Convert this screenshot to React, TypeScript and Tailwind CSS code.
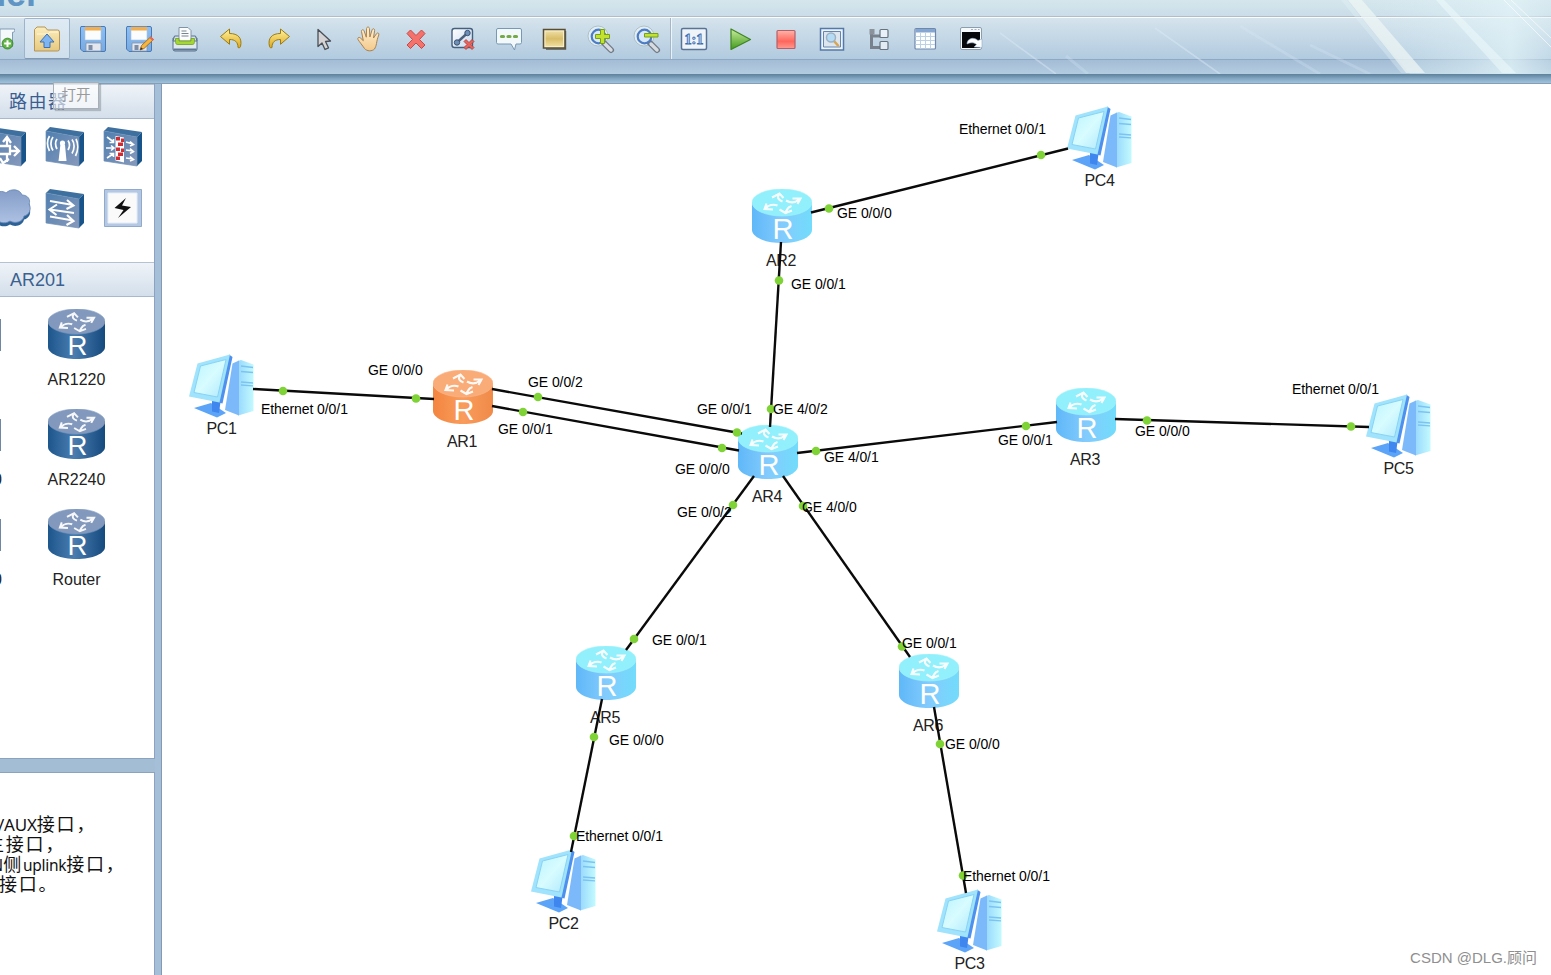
import type { ReactNode } from "react";

const INK = "#44607f";

function Icon({ children, s = 32 }: { children: ReactNode; s?: number }) {
  return (
    <svg width={s} height={s} viewBox="0 0 32 32" fill="none" className="shrink-0">
      {children}
    </svg>
  );
}

function Defs() {
  return (
    <svg width="0" height="0" className="absolute">
      <defs>
        <linearGradient id="gold" x1="0" y1="0" x2="0" y2="1"><stop offset="0" stopColor="#fff3a0" /><stop offset="1" stopColor="#dfa81d" /></linearGradient>
        <linearGradient id="folder" x1="0" y1="0" x2="0" y2="1"><stop offset="0" stopColor="#fbedbb" /><stop offset="1" stopColor="#e6c97f" /></linearGradient>
        <linearGradient id="green" x1="0" y1="0" x2="0" y2="1"><stop offset="0" stopColor="#c9ec9c" /><stop offset="1" stopColor="#3f9a1c" /></linearGradient>
        <linearGradient id="red" x1="0" y1="0" x2="0" y2="1"><stop offset="0" stopColor="#ffb3a8" /><stop offset=".6" stopColor="#ff665c" /><stop offset="1" stopColor="#ff9a90" /></linearGradient>
        <linearGradient id="note" x1="0" y1="0" x2="0" y2="1"><stop offset="0" stopColor="#ecdc9f" /><stop offset=".5" stopColor="#d9bd69" /><stop offset="1" stopColor="#eddd9d" /></linearGradient>
        <linearGradient id="disk" x1="0" y1="0" x2="0" y2="1"><stop offset="0" stopColor="#8fc0f4" /><stop offset="1" stopColor="#77a8e0" /></linearGradient>
        <linearGradient id="pale" x1="0" y1="0" x2="1" y2="1"><stop offset="0" stopColor="#ffffff" /><stop offset="1" stopColor="#c4d8ee" /></linearGradient>
        <linearGradient id="hand" x1="0" y1="0" x2="0" y2="1"><stop offset="0" stopColor="#fff0d2" /><stop offset="1" stopColor="#f3c98b" /></linearGradient>
        <linearGradient id="tile" x1="0" y1="0" x2="1" y2="1"><stop offset="0" stopColor="#4f7fb0" /><stop offset="1" stopColor="#8799bb" /></linearGradient>
        <linearGradient id="cloud" x1="0" y1="0" x2="0" y2="1"><stop offset="0" stopColor="#849dc7" /><stop offset="1" stopColor="#adc1e3" /></linearGradient>
        <linearGradient id="navyBody" x1="0" y1="0" x2="1" y2="0"><stop offset="0" stopColor="#1d568c" /><stop offset=".45" stopColor="#4a7db0" /><stop offset="1" stopColor="#154a7e" /></linearGradient>
        <linearGradient id="orangeBody" x1="0" y1="0" x2="1" y2="0"><stop offset="0" stopColor="#f3853f" /><stop offset=".5" stopColor="#f99c5c" /><stop offset="1" stopColor="#f08a49" /></linearGradient>
        <linearGradient id="cyanBody" x1="0" y1="0" x2="1" y2="0"><stop offset="0" stopColor="#5fb8f8" /><stop offset=".5" stopColor="#83cbfd" /><stop offset="1" stopColor="#72dcfb" /></linearGradient>
        <linearGradient id="screen" x1="0" y1="0" x2="1" y2="1"><stop offset="0" stopColor="#b9f3fd" /><stop offset=".5" stopColor="#d8fcff" /><stop offset="1" stopColor="#aee8fd" /></linearGradient>
        <linearGradient id="tower" x1="0" y1="0" x2="1" y2="0"><stop offset="0" stopColor="#98d8fd" /><stop offset="1" stopColor="#c3fafe" /></linearGradient>
      </defs>
    </svg>
  );
}

const FloppyBody = () => (
  <>
    <path d="M4 3.500h23a1.500 1.500 0 0 1 1.500 1.500v22a1.500 1.500 0 0 1-1.500 1.500H6L3.500 26V5z" fill="url(#disk)" stroke="#4a7ab5" />
    <path d="M8 4h16v13H8z" fill="#fafcfd" stroke="#a9c4e4" strokeWidth=".6" />
    <path d="M8 4h16v3.500H8z" fill="#f3ae4d" />
    <path d="M9 20h15v8H9z" fill="#e4e8ee" stroke="#8295b0" strokeWidth=".8" />
    <path d="M11.500 22h4v5h-4z" fill="#7c8da5" />
  </>
);

const UndoShape = () => (
  <path d="M4.500 13.500 13.500 6v4.500c8.500 0 13 4.500 11 13-.2 1.200-1.500 1.500-2.500 1 0-5.500-3-8-8.500-8v4.800z" fill="url(#gold)" stroke="#9a7c12" strokeLinejoin="round" />
);

const Lens = () => (
  <>
    <circle cx="13" cy="13" r="10" fill="#e3eef0" stroke="#a2b8c2" strokeWidth=".8" />
    <path d="m19 20 7 7" stroke="#707984" strokeWidth="6" strokeLinecap="round" />
    <path d="m20 21 6 6" stroke="#d6dce1" strokeWidth="3.400" strokeLinecap="round" />
    <circle cx="13.500" cy="13.500" r="6.800" fill="#d9e9fb" stroke="#4c7cc4" strokeWidth="2.200" />
  </>
);

const editIcons: ReactNode[] = [
  <>
    <path d="M3.500 28V6.500L6 4h8l2.500 3H26.500a2 2 0 0 1 2 2v17a2 2 0 0 1-2 2z" fill="url(#folder)" stroke="#b3955a" />
    <path d="M6 11h11l2-2h8" stroke="#fff7d9" />
    <path d="m16 11 7 8h-4v5.500h-6V19H9z" fill="#7fb5f0" stroke="#3e70b4" strokeLinejoin="round" />
  </>,
  <FloppyBody />,
  <>
    <FloppyBody />
    <path d="m17 27 1.500-4.500L27.500 14l3 2.500L21 25.500z" fill="#f6b53f" stroke="#a56a1e" strokeWidth=".9" />
    <path d="m26.500 15 1.500-1.500 3 3-1.500 1.500z" fill="#e4685b" />
    <path d="m17 27 1-2.800 2 1.800z" fill="#333" />
  </>,
  <>
    <path d="M4 15h24v11a2 2 0 0 1-2 2H6a2 2 0 0 1-2-2z" fill="#e0e9f1" stroke="#56718f" />
    <path d="M5.500 13h21l1.500 5H4z" fill="#d6e1ea" stroke="#56718f" />
    <path d="M10 4.500h9l3 3V18H10z" fill="#fbfcfd" stroke="#8293a5" />
    <path d="M12.500 8h5M12.500 10.500h7M12.500 13h7" stroke="#77848f" />
    <path d="M6.500 15.500c0 5 0 6 2.500 6h14c2.500 0 2.500-1 2.500-6h-3.500V18H10v-2.500z" fill="#a4d634" stroke="#6fa01d" strokeWidth=".8" />
    <path d="M4.500 26.500h23" stroke="#5e7793" strokeWidth="2" />
  </>,
  <UndoShape />,
  <g transform="translate(32 0) scale(-1 1)"><UndoShape /></g>,
  <path d="M10 6.500v17l4-3.500 3 6.500 3.500-1.700-3-6.300 5-.5z" fill="#d5d3d3" stroke="#4a4f57" strokeWidth="1.300" strokeLinejoin="round" />,
  <path d="M10.500 25.500c-2-3-5-6.500-6.500-9-.8-1.800 1-2.800 2.300-1.600l3 2.800L7.500 8.500c-.2-2 2-2.400 2.600-.6l2.200 6.300.3-8.700c.2-2 2.600-2 2.800 0l.5 8.500 2.200-7.200c.6-1.700 2.800-1.200 2.500.7L19.500 15l3-4.300c1.100-1.500 3-.4 2.300 1.300-1.300 3.300-1.800 5.500-2.300 8.500-.4 2.500-1.200 4-2 5.500-2.500 2.500-7.500 2.500-10-.5z" fill="url(#hand)" stroke="#a9814d" />,
  <path d="M7 10.500 10.500 7l5.500 5.500L21.500 7l3.500 3.500-5.500 6L25 22l-3.500 3.500-5.500-5.500-5.500 5.500L7 22l5.500-5.500z" fill="#f3736c" stroke="#c94744" strokeLinejoin="round" />,
  <>
    <rect x="5" y="5.500" width="20.500" height="19" rx="2.500" fill="url(#pale)" stroke={INK} strokeWidth="1.400" />
    <path d="m9.500 20 11-10" stroke="#4c617d" strokeWidth="2.400" />
    <circle cx="10" cy="19.500" r="2.700" fill="#6d8fb8" stroke="#3c5272" />
    <circle cx="20.500" cy="10" r="2.700" fill="#6d8fb8" stroke="#3c5272" />
    <path d="m17 18.500 2-2 3 3 3-3 2 2-3 3 3 3-2 2-3-3-3 3-2-2 3-3z" fill="#e8615a" stroke="#a63b3a" strokeWidth=".8" />
  </>,
  <>
    <path d="M5 5.500h22a1.500 1.500 0 0 1 1.500 1.500v12.500A1.500 1.500 0 0 1 27 21h-4l-1.500 6-3.500-6H5a1.500 1.500 0 0 1-1.500-1.500V7A1.500 1.500 0 0 1 5 5.500z" fill="#f3f8fb" stroke="#7799b6" />
    <path d="M8.500 13.500h2M15 13.500h2M21.500 13.500h2" stroke="#74a848" strokeWidth="3.200" strokeLinecap="round" />
  </>,
  <>
    <path d="M4.500 6.500h21.500v18.500H4.500z" fill="#f8eec5" stroke="#574e34" strokeWidth="1.500" />
    <path d="M6.500 8.500h17.500v14.500H6.500z" fill="url(#note)" />
    <path d="M26.500 8v18H7" stroke="#575548" strokeWidth="1.400" />
  </>,
  <>
    <Lens />
    <path d="M15.500 6.500h4v5h5v4h-5v5h-4v-5h-5v-4h5z" fill="#c2e22e" stroke="#77a018" />
  </>,
  <>
    <Lens />
    <path d="M13.500 10.500h13.500v3.500h-13.500z" fill="#c2e22e" stroke="#77a018" />
  </>,
];

const viewIcons: ReactNode[] = [
  <>
    <rect x="3.500" y="5.500" width="25" height="21" rx="1.500" fill="#eff4f9" stroke="#587396" strokeWidth="1.500" />
    <text x="16" y="21" textAnchor="middle" fontFamily="Liberation Serif, serif" fontWeight="700" fontSize="14.500" textLength="19" lengthAdjust="spacingAndGlyphs" fill="#cfe2fa" stroke="#3d6cae" strokeWidth=".9">1:1</text>
  </>,
  <path d="M7 6v20.500L26.500 16.500z" fill="url(#green)" stroke="#3f8423" strokeWidth="1.200" strokeLinejoin="round" />,
  <rect x="7" y="7.500" width="18" height="18" rx="1" fill="url(#red)" stroke="#b3606a" strokeWidth="1.200" />,
  <>
    <path d="M4.500 5.500h23v21.500H4.500z" fill="#eef4fb" stroke="#5479a8" strokeWidth="1.500" />
    <path d="M7.500 8.500h17v15.500H7.500z" fill="#dde6ee" stroke="#6485ae" />
    <path d="m17.500 17.500 4.500 5" stroke="#d6a655" strokeWidth="2.600" strokeLinecap="round" />
    <circle cx="15" cy="14.500" r="4.500" fill="#b4dcf4" stroke="#9bb2c6" strokeWidth="1.500" />
  </>,
  <>
    <path d="M8.500 7v17.500H18M8.500 13H17" stroke="#79818c" strokeWidth="3" />
    <rect x="6.500" y="6" width="5" height="5.500" fill="#8b929c" />
    <rect x="17" y="6.500" width="8" height="8" rx="1" fill="#eaf0f7" stroke="#67727f" strokeWidth="1.200" />
    <rect x="17" y="18.500" width="8" height="8" rx="1" fill="#e2ebf4" stroke="#67727f" strokeWidth="1.200" />
  </>,
  <>
    <rect x="6" y="5.500" width="20.500" height="20.500" rx="1" fill="#fdfefe" stroke="#6d88ab" strokeWidth="1.200" />
    <path d="M6.500 6h19.500v3.500H6.500z" fill="#86a6d2" />
    <path d="M6.500 13.500h19.500M6.500 17.500h19.500M6.500 21.500h19.500M11.500 10v15.500M16.500 10v15.500M21.500 10v15.500" stroke="#bcd0e6" />
  </>,
  <>
    <rect x="5.500" y="4.500" width="21" height="22" rx="1.500" fill="#f7fafc" stroke="#8c9dae" />
    <path d="M16 6.500h2M19.500 6.500h2M23 6.500h1.500" stroke="#9fb1c4" />
    <path d="M7 9h18v16H7z" fill="#05070a" />
    <path d="M12 21c0-5 6-8 11-3.500l4-1.500v8.500l-8-.5 2.500-2.500c-3-2.500-6-2-9.500-.5z" fill="#fbfdfe" stroke="#93abc6" strokeWidth=".6" />
  </>,
];

type Tone = "cyan" | "orange" | "navy";
const tones: Record<Tone, { top: string; body: string; rim: string }> = {
  cyan: { top: "#91f0fb", body: "url(#cyanBody)", rim: "#a3f3fb" },
  orange: { top: "#f9ab78", body: "url(#orangeBody)", rim: "#fbb98d" },
  navy: { top: "#8398bd", body: "url(#navyBody)", rim: "#7d9cc0" },
};

function RouterIcon({ tone, w, h }: { tone: Tone; w: number; h: number }) {
  const t = tones[tone];
  return (
    <svg width={w} height={h} viewBox="0 0 60 54" preserveAspectRatio="none" className="shrink-0">
      <path d="M0 13v28c0 7 13 13 30 13s30-6 30-13V13z" fill={t.body} />
      <ellipse cx="30" cy="13.500" rx="30" ry="13.500" fill={t.top} stroke={t.rim} strokeWidth=".6" />
      <g stroke="#fff" strokeWidth="2.100" fill="none" opacity=".93">
        <path d="M20 8.500 27.500 4.500 31.500 9M27 5.500c-2 3-1 5.500 3.500 7" />
        <path d="M40.500 9.500h8l-3 5.500M47 10.500c-4 3.500-9 3.500-13 1" />
        <path d="M14.500 14.500 12.500 20l8.500.5M13.500 19.500c3-3.500 8-4.500 12-3" />
        <path d="M27.500 20.500 33.500 24l6.500-2.500M33.500 23c2.500-2.500 1-4.500 6-6" />
      </g>
      <text x="31" y="50" textAnchor="middle" fontFamily="Liberation Sans, Arial, sans-serif" fontSize="29" fill="#fff" textLength="21" lengthAdjust="spacingAndGlyphs">R</text>
    </svg>
  );
}

function PcIcon() {
  return (
    <svg width="65" height="64" viewBox="0 0 65 64">
      <path d="m49 7 3-1 12.500 4.500V57L49 61.500z" fill="url(#tower)" />
      <path d="m43.500 9.500 6.500-3v55L36 56z" fill="#7cb9fa" />
      <path d="m52 12 12 1.500M52 17.500l12 1M52 28l12 1M52 31l12 .8" stroke="#7cc3f2" strokeWidth="1.300" />
      <path d="m5 54 17-5 15 10-9 4.500z" fill="#5ba4f8" />
      <path d="m23 46 8.500 2-1.500 11-7-1.500z" fill="#3f86ee" />
      <path d="m40 .5 3.500 2.500-10 46.500-4-1z" fill="#4d90ee" />
      <path d="M8.500 9.500 41 .5l-10.500 48L0 42.500z" fill="#9fe3fc" />
      <path d="M11.500 12 37 5.500 28.500 43 5 38.500z" fill="url(#screen)" stroke="#8ad2f5" strokeWidth="1" />
    </svg>
  );
}

const ORIGIN = { x: 161, y: 84 };

const routers: { name: string; x: number; y: number; tone: Tone }[] = [
  { name: "AR1", x: 433, y: 370, tone: "orange" },
  { name: "AR2", x: 752, y: 189, tone: "cyan" },
  { name: "AR3", x: 1056, y: 388, tone: "cyan" },
  { name: "AR4", x: 738, y: 425, tone: "cyan" },
  { name: "AR5", x: 576, y: 646, tone: "cyan" },
  { name: "AR6", x: 899, y: 654, tone: "cyan" },
];

const pcs = [
  { name: "PC1", x: 189, y: 354 },
  { name: "PC2", x: 531, y: 849 },
  { name: "PC3", x: 937, y: 889 },
  { name: "PC4", x: 1067, y: 106 },
  { name: "PC5", x: 1366, y: 394 },
];

const links = [
  { line: [253, 389, 434, 399], dots: [[283, 391], [416, 398.5]] },
  { line: [492, 389, 742, 433.5], dots: [[538, 397], [737, 432.5]] },
  { line: [492, 406, 739, 450.5], dots: [[523, 412], [722, 448]] },
  { line: [781, 242, 770, 427], dots: [[779, 280.5], [771, 409]] },
  { line: [811, 212.5, 1068, 148.500], dots: [[829, 208.500], [1041, 155]] },
  { line: [797, 453, 1057, 422], dots: [[816, 451], [1026, 426]] },
  { line: [1115, 419, 1369, 427], dots: [[1147, 420.5], [1351, 426.500]] },
  { line: [754, 476, 626, 650], dots: [[733, 505], [634, 639]] },
  { line: [783, 476, 910, 657], dots: [[803, 506], [902, 646.500]] },
  { line: [602, 699, 571, 852], dots: [[594, 737], [574, 836]] },
  { line: [934, 707, 966, 893], dots: [[940, 744], [963, 875.500]] },
];

const ports: [string, number, number][] = [
  ["Ethernet 0/0/1", 261, 409],
  ["GE 0/0/0", 368, 370],
  ["GE 0/0/2", 528, 382],
  ["GE 0/0/1", 498, 429],
  ["GE 0/0/1", 697, 409],
  ["GE 4/0/2", 773, 409],
  ["GE 0/0/0", 675, 469],
  ["GE 0/0/2", 677, 512],
  ["GE 4/0/1", 824, 457],
  ["GE 4/0/0", 802, 507],
  ["GE 0/0/0", 837, 213],
  ["GE 0/0/1", 791, 284],
  ["Ethernet 0/0/1", 959, 129],
  ["GE 0/0/1", 998, 440],
  ["GE 0/0/0", 1135, 431],
  ["Ethernet 0/0/1", 1292, 389],
  ["GE 0/0/1", 652, 640],
  ["GE 0/0/0", 609, 740],
  ["Ethernet 0/0/1", 576, 836],
  ["GE 0/0/1", 902, 643],
  ["GE 0/0/0", 945, 744],
  ["Ethernet 0/0/1", 963, 876],
];

function Topology() {
  const at = (x: number, y: number) => ({ left: x - ORIGIN.x, top: y - ORIGIN.y });
  return (
    <main className="relative min-w-0 flex-1 overflow-hidden border-l border-[#8399b5] bg-white font-['Liberation_Sans',Arial,sans-serif]">
      <div className="absolute -left-px top-0 h-[891px] w-[1390px]">
        {routers.map((r) => (
          <div key={r.name} className="absolute flex w-[60px] flex-col items-center" style={at(r.x, r.y)}>
            <RouterIcon tone={r.tone} w={60} h={54} />
            <span className="mt-[10px] -ml-[2px] text-[16px] leading-[16px] tracking-[-0.400px] text-[#222]">{r.name}</span>
          </div>
        ))}
        {pcs.map((p) => (
          <div key={p.name} className="absolute flex w-[65px] flex-col items-center" style={at(p.x, p.y)}>
            <PcIcon />
            <span className="mt-[3px] text-[16px] leading-[16px] tracking-[-0.400px] text-[#222]">{p.name}</span>
          </div>
        ))}
        <svg width="1390" height="891" viewBox="161 84 1390 891" className="absolute left-0 top-0">
          {links.map(({ line: [x1, y1, x2, y2], dots }, i) => (
            <g key={i}>
              <path d={`M${x1} ${y1}L${x2} ${y2}`} stroke="#0a0a0a" strokeWidth="2.400" />
              {dots.map(([cx, cy]) => (
                <circle key={cx} cx={cx} cy={cy} r="4.300" fill="#80d337" />
              ))}
            </g>
          ))}
        </svg>
        {ports.map(([label, x, y], i) => (
          <span key={i} className="absolute -mt-[7px] whitespace-nowrap text-[14px] leading-[14px] tracking-[-0.080px] text-black" style={at(x, y)}>
            {label}
          </span>
        ))}
      </div>
    </main>
  );
}

function Tile({ children }: { children: ReactNode }) {
  return (
    <svg width="40" height="40" viewBox="0 0 40 40" fill="none">
      <path d="m1 4 4-4 34 5-5 5z" fill="#3e709f" />
      <path d="m34 10 5-5v29l-5 5z" fill="#185489" />
      <path d="m1 4 33 6v29L1 34z" fill="url(#tile)" stroke="#6d8fb4" strokeWidth=".7" />
      {children}
    </svg>
  );
}

function Categories() {
  return (
    <div className="-ml-[22px] grid w-[174px] grid-cols-3 gap-y-[22px] justify-items-center pt-[8px]">
      <Tile>
        <path d="M20 11v8M20 26v9M24 24h7M11 19h12v8H11zM16 15l4-5 4 6M27 19l5 5-5 5M13 31l3 5 6-4" stroke="#fff" strokeWidth="2.300" />
      </Tile>
      <Tile>
        <path d="m15.500 17 4.500 1L21.500 34h-8z" fill="#fff" />
        <circle cx="17.500" cy="16" r="2.600" fill="#fff" />
        <path d="M12 12c-2 3-1.500 7 0 10M8 10c-3 4-2.500 10 0 13.500M4.500 9c-3 5-2 11 0 15M23 13.500c2 3 1.500 7 0 9.500M27 12.500c3 4 2.500 10 0 14M31 12c2.500 5 2 12-.5 17" stroke="#fff" strokeWidth="1.700" />
      </Tile>
      <Tile>
        <path d="M12.500 9 21 10.500v25l-8.500-2z" fill="#fff" />
        <path d="M13 10h4v3.500h-4zM18 11.500h3V15h-3zM15 15.500h5V19h-5zM13 20.500h4V24h-4zM18 21.500h3V25h-3zM15 25.500h5V29h-5zM13 29.500h4V33h-4z" fill="#cf2c33" />
        <path d="m4 10 6 4.500m-3.500 1h4V12M3 21h8M8 18.500l3 2.500-3 2.500M4 31l6-4m-3.500-.5h4V30M23 15l7 2m-3-2.500 3.500 3-3.500 1.500M23 23l7 1m-3-2.500 3.500 3-3.500 2M23 31l7 1m-3-2.500 3.500 3-3.500 1.500" stroke="#fff" strokeWidth="1.600" />
      </Tile>
      <svg width="48" height="40" viewBox="0 0 48 40">
        <path d="M8 14C9 6 18 3 23 6c5-5 14-4 16 2 6 0 9 5 7 9 3 5 0 11-5 12-1 6-9 8-14 5-6 4-13 1-14-4C4 31 1 20 8 14z" fill="#2d6297" transform="translate(0 1.500)" />
        <path d="M8 12C9 4 18 0 23 4c5-5 14-4 16 2 6 0 9 5 7 9 3 5 0 11-5 12-1 6-9 8-14 5-6 4-13 1-14-4C4 29 1 18 8 12z" fill="url(#cloud)" stroke="#6486b4" strokeWidth=".8" />
      </svg>
      <Tile>
        <path d="M5 12l23 4M22 11l6.500 5.500-7 3.500M29 24 5 20.500M12 15.500 4.500 20.500l7 5.500M5 27.500l23 4M22 26l6.500 6-7 4" stroke="#fff" strokeWidth="2.100" />
      </Tile>
      <svg width="38" height="38" viewBox="0 0 38 38">
        <path d="M.5.500h37v37H.5z" fill="#b4c8e3" stroke="#91a9cb" />
        <path d="M4 4h29v30H4z" fill="#fafafa" stroke="#e4edf8" />
        <path d="M22 9 10.500 19l9 2L14 29l13-11-9-1.500z" fill="#111" />
      </svg>
    </div>
  );
}

const models = [
  { name: "AR1220", edge: "" },
  { name: "AR2240", edge: "0" },
  { name: "Router", edge: "0" },
];

function PanelTitle({ children }: { children: ReactNode }) {
  return (
    <h2 className="flex h-[35px] shrink-0 items-center border-y border-[#a9b9cc] border-t-[#b4c2d2] bg-linear-to-b from-[#eff3f8] to-[#d3dfeb] pl-[9px] text-[18px] leading-none text-[#3a618f]">
      {children}
    </h2>
  );
}

function Sidebar() {
  return (
    <aside className="flex w-[155px] shrink-0 flex-col font-['Liberation_Sans','Noto_Sans_CJK_SC',sans-serif]">
      <section className="flex h-[675px] shrink-0 flex-col overflow-hidden border-b border-r border-[#8ba3be] bg-white">
        <PanelTitle><span className="text-[#3a5e92] tracking-[1.500px]">路由器</span></PanelTitle>
        <div className="h-[143px] shrink-0 overflow-hidden"><Categories /></div>
        <PanelTitle><span className="pl-px">AR201</span></PanelTitle>
        <ul className="flex flex-col pt-[12px]">
          {models.map((m) => (
            <li key={m.name} className="flex h-[100px]">
              <div className="flex w-[2px] shrink-0 flex-col items-end overflow-hidden">
                <div className="mr-px mt-[10px] h-[32px] w-px shrink-0 bg-[#6f87a3]" />
                <span className="mt-[21px] text-[16px] leading-[16px] text-[#222]">{m.edge}</span>
              </div>
              <div className="flex w-[148px] flex-col items-center">
                <RouterIcon tone="navy" w={57} h={50} />
                <span className="mt-[13px] pl-px text-[16px] leading-[16px] text-[#222]">{m.name}</span>
              </div>
            </li>
          ))}
        </ul>
      </section>
      <div className="h-[13px] shrink-0 bg-[#a3bdd5]" />
      <section className="flex-1 overflow-hidden whitespace-nowrap border-r border-t border-[#8ba3be] bg-white pt-[41px] font-['Noto_Sans','Noto_Sans_CJK_SC',sans-serif] text-[18px] leading-[20px] tracking-[1.800px] text-[#111]">
        <p className="-ml-[2px] h-[20px]"><span className="text-[17px] leading-none tracking-[-0.200px]">/AUX</span>接口，</p>
        <p className="-ml-[14px] h-[20px]">主接口，</p>
        <p className="-ml-[9px] h-[20px]"><span className="text-[16px] leading-none tracking-normal">N</span>侧<span className="text-[15.500px] leading-none tracking-[-0.300px]">uplink</span>接口，</p>
        <p className="-ml-px h-[20px]">接口。</p>
      </section>
    </aside>
  );
}

function Toolbar() {
  return (
    <div className="flex h-[43px] items-center border-y border-b-[#8fa9c4] border-t-white/90">
      <div className="flex h-full w-[24px] shrink-0 items-center justify-end pr-[9px]">
        <svg width="18" height="30" viewBox="0 0 18 30" className="mt-[1px]">
          <path d="M0 3h17.500c.5 2 .5 4-2.500 4v17H0z" fill="#f4f9fc" stroke="#6f8ba8" />
          <circle cx="9" cy="20.500" r="6.500" fill="#60b345" stroke="#35802a" />
          <path d="M9 16.500v8M5 20.500h8" stroke="#fff" strokeWidth="2.400" />
        </svg>
      </div>
      {editIcons.map((icon, i) => (
        <div
          key={i}
          className={
            i === 0
              ? "flex h-full w-[46px] shrink-0 items-center justify-center rounded-xs border border-[#9db4cb] border-b-[#8299b3] bg-linear-to-b from-[#dfeaf3] to-[#cfdfec]"
              : "flex h-full w-[46.200px] shrink-0 items-center justify-center"
          }
        >
          <Icon>{icon}</Icon>
        </div>
      ))}
      <div className="-mr-[2px] h-full w-[2px] shrink-0 border-l border-r border-l-[#a2b7c9] border-r-white/70" />
      {viewIcons.map((icon, i) => (
        <div key={i} className="flex h-full w-[46.300px] shrink-0 items-center justify-center">
          <Icon>{icon}</Icon>
        </div>
      ))}
    </div>
  );
}

function Glare() {
  return (
    <svg width="551" height="74" viewBox="1000 0 551 74" className="absolute right-0 top-0">
      <defs>
        <linearGradient id="shine" x1="0" x2="1"><stop offset="0" stopColor="#dff2f6" stopOpacity="0" /><stop offset=".6" stopColor="#e3f5f8" stopOpacity=".5" /><stop offset=".8" stopColor="#e3f5f8" stopOpacity=".75" /><stop offset="1" stopColor="#dff2f6" stopOpacity=".35" /></linearGradient>
      </defs>
      <path d="M1350 0h201v74h-141z" fill="url(#shine)" />
      <path d="M1348 0h14l63 73h-19z" fill="#eef5f4" opacity=".75" />
      <path d="M1341 0h6l59 73h-5z" fill="#e5f4f6" opacity=".35" />
      <path d="M1436 0h8l72 73h-14z" fill="#f0fbfb" opacity=".5" />
      <path d="m1504 0 47 47M1511 0l40 38" stroke="#fff" strokeOpacity=".6" />
      <path d="m1000 33 56 41M1155 28l65 46" stroke="#dcecf6" strokeOpacity=".45" strokeWidth="1.600" />
      <path d="m1066 56 22 18M1240 26l80 48M1310 45l60 29M955 0l45 33" stroke="#dcecf6" strokeOpacity=".25" strokeWidth="3" />
    </svg>
  );
}

export default function App() {
  return (
    <div className="relative flex h-[975px] w-[1551px] flex-col overflow-hidden bg-[#a3bdd9]">
      <Defs />
      <header className="relative flex h-[74px] shrink-0 flex-col bg-[#a9c2da]">
        <div className="h-[17px] shrink-0 overflow-hidden border-b border-[#b2bec7] bg-linear-to-b from-[#d5e6ec] to-[#cadde9]">
          <div className="-ml-[16px] -mt-[25px] font-['Liberation_Sans',Arial,sans-serif] text-[36px] font-bold leading-[37px] text-[#6094c4]">ner</div>
        </div>
        <div className="bg-linear-to-b from-[#d6e4ed] to-[#b1cadf]">
          <Toolbar />
        </div>
        <div className="flex-1 bg-linear-to-b from-[#a4bdd6] to-[#b3cce0]" />
        <div className="pointer-events-none absolute inset-0"><Glare /></div>
      </header>
      <div className="h-[10px] shrink-0 border-b border-[#869db4] bg-linear-to-b from-[#5c8199] via-[#83a6c2] to-[#9fc2dd]" />
      <div className="flex min-h-0 flex-1">
        <Sidebar />
        <div className="w-[6px] shrink-0 bg-[#a5bfd9]" />
        <Topology />
      </div>
      <div className="absolute left-[53px] top-[82px] flex h-[27px] w-[46px] items-center justify-center border border-[#a9afb6] bg-white/60 pb-[2px] font-['Noto_Sans_CJK_SC',sans-serif] text-[14.500px] leading-none text-[#9a9a9a] shadow-[2px_2px_1px_rgba(120,130,140,0.45)]">
        打开
      </div>
      <div className="absolute bottom-[8px] right-[14px] font-['Liberation_Sans','Noto_Sans_CJK_SC',sans-serif] text-[15px] leading-[18px] text-[#8f8f8f]">
        CSDN @DLG.顾问
      </div>
    </div>
  );
}
